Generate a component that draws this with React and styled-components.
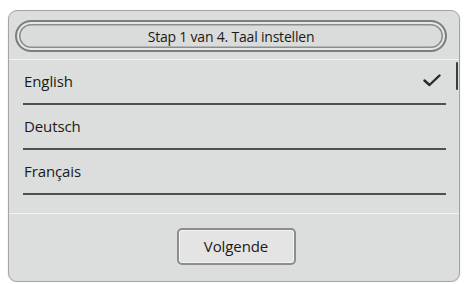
import React from "react";
import styled, { createGlobalStyle } from "styled-components";

const Global = createGlobalStyle`
  html, body { margin: 0; padding: 0; background: #ffffff; }
  body { font-family: "Open Sans", "Noto Sans", sans-serif; color: #222; }
`;

const Panel = styled.div`
  box-sizing: border-box;
  margin: 10px 0 0 8px;
  width: 452px;
  height: 272px;
  border: 1.5px solid #a3a5a4;
  border-radius: 9px;
  background: #dcdedd;
  display: flex;
  flex-direction: column;
  box-shadow: 0 1px 2px rgba(0,0,0,0.12);
  overflow: hidden;
`;

const Header = styled.div`
  padding: 9px 12px 6.5px 6px;
  border-bottom: 1.5px solid #f1f2f1;
`;

const Pill = styled.div`
  box-sizing: border-box;
  height: 32px;
  border: 2px solid #7d7f7e;
  border-radius: 16px;
  box-shadow: inset 0 0 0 2px #e6e7e6, inset 0 0 0 3.5px #8c8e8d;
  background: #dadcdb;
  display: flex;
  align-items: center;
  justify-content: center;
  font-size: 14px;
  color: #1a1a1a;
  letter-spacing: -0.2px;
`;

const List = styled.div`
  position: relative;
  flex: 0 0 auto;
  padding: 0 13px 0 14px;
  height: 153px;
  border-bottom: 1.5px solid #f1f2f1;
`;

const Row = styled.div`
  box-sizing: border-box;
  height: 45px;
  display: flex;
  align-items: center;
  justify-content: space-between;
  border-bottom: 2px solid #4f5150;
  font-size: 15px;
  color: #1a1a1a;
  padding: 0 5px 1px 1px;
  letter-spacing: -0.1px;
`;

const ScrollThumb = styled.div`
  position: absolute;
  right: 1px;
  top: 2px;
  width: 2.5px;
  height: 28px;
  background: #3c3e3d;
  border-radius: 1px;
`;

const Footer = styled.div`
  flex: 1;
  display: flex;
  align-items: center;
  justify-content: center;
  padding: 0 0 2px 4px;
`;

const Button = styled.button`
  box-sizing: border-box;
  width: 119px;
  height: 37px;
  border: 2px solid #8c8e8d;
  border-radius: 5px;
  background: #e3e4e3;
  font-family: "Open Sans", "Noto Sans", sans-serif;
  font-size: 15px;
  letter-spacing: -0.1px;
  color: #1a1a1a;
  padding: 0;
  box-shadow: inset 0 0 0 1px #f4f4f4;
`;

const Check = () => (
  <svg width="18" height="13" viewBox="0 0 18 13">
    <path d="M1.5 6.5 L6.5 11 L16.5 1.5" fill="none" stroke="#2a2a2a" strokeWidth="2.4" strokeLinecap="round" strokeLinejoin="round" />
  </svg>
);

const languages = ["English", "Deutsch", "Français"];

export default function App() {
  return (
    <>
      <Global />
      <Panel>
        <Header>
          <Pill>Stap 1 van 4. Taal instellen</Pill>
        </Header>
        <List>
          {languages.map((l, i) => (
            <Row key={l}>
              <span>{l}</span>
              {i === 0 && <Check />}
            </Row>
          ))}
          <ScrollThumb />
        </List>
        <Footer>
          <Button>Volgende</Button>
        </Footer>
      </Panel>
    </>
  );
}
